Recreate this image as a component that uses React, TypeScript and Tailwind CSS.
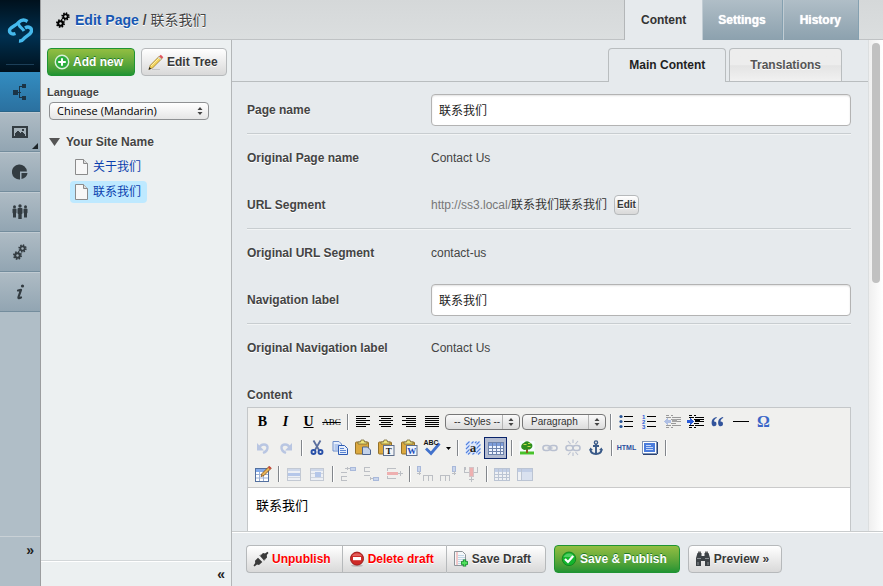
import type { ReactNode } from "react";

/* ---------- shared pieces ---------- */

function Svg({ size = 16, box = size, crisp = false, label, children }: { size?: number; box?: number; crisp?: boolean; label?: string; children: ReactNode }) {
  return (
    <svg width={size} height={size} viewBox={`0 0 ${box} ${box}`} fill="none" className="shrink-0" shapeRendering={crisp ? "crispEdges" : "auto"} aria-hidden={!label} aria-label={label}>
      {children}
    </svg>
  );
}

const silver = "border-[#b6b9bb] bg-linear-to-b from-white to-[#d9d9d9] text-[#393939] [text-shadow:0_1px_0_#fff]";
const green = "border-[#1f9433] bg-linear-to-b from-[#93be42] to-[#1f9433] text-white [text-shadow:0_-1px_0_#1f7a2c]";
const danger = "border-[#b6b9bb] bg-linear-to-b from-white to-[#d9d9d9] text-[#ff0000] [text-shadow:0_1px_0_#fff]";

function Button({ tone, shape = "rounded", pad = "pr-3", icon, children }: { tone: string; shape?: string; pad?: string; icon: ReactNode; children: ReactNode }) {
  return (
    <button type="button" className={`flex h-7 items-center gap-[3px] whitespace-nowrap border pl-1.5 text-xs font-bold ${pad} ${tone} ${shape}`}>
      {icon}
      {children}
    </button>
  );
}

/* ---------- icons ---------- */

function Gear({ x, y, r, hole }: { x: number; y: number; r: number; hole: string }) {
  return (
    <g>
      <circle cx={x} cy={y} r={r} stroke="currentColor" strokeWidth="2" strokeDasharray={`${r * 0.42} ${r * 0.365}`} />
      <circle cx={x} cy={y} r={r - 0.2} fill="currentColor" />
      <circle cx={x} cy={y} r={1.2} fill={hole} />
    </g>
  );
}
const Gears = ({ hole }: { hole: string }) => (
  <Svg>
    <Gear x={10.5} y={4.5} r={3.2} hole={hole} />
    <Gear x={5.5} y={11.5} r={3.5} hole={hole} />
  </Svg>
);

const Logo = () => (
  <svg width="26" height="26" viewBox="0 0 26 26" fill="none" aria-label="SilverStripe">
    <g stroke="#45b9ec" strokeWidth="3.400" strokeLinejoin="round">
      <path d="M8.500 15.500C4 17 1.500 14 3 11 4.500 8.500 9 7.500 11.500 4.500 14 2 17.500 1.500 20.500 3.500" />
      <path d="M11.500 5C11 8.500 15.500 10 17 13" strokeWidth="3" />
      <path d="M18 10C22 7.500 25.500 10.500 24.200 14 23 17 18.500 18.500 16.500 21 15.500 22.500 14 23.200 12 23" />
    </g>
  </svg>
);

const SiteMap = () => (
  <Svg crisp>
    <path d="M1 6h5v5H1zM10 0h4v4h-4zM10 12h4v4h-4z" fill="#1b3446" />
    <path d="M6 8.500h2.500M10 2.500H7.500v11H10" stroke="#1b3446" />
  </Svg>
);
const Picture = () => (
  <Svg crisp>
    <path d="M0 2h16v12H0z" fill="#333c42" />
    <path d="M2 4h12v8H2z" fill="#a4b1b9" />
    <path d="M3 12V9l3-3 2 3 2-2 3 4v1z" fill="#333c42" />
    <path d="M10 5h2v2h-2z" fill="#333c42" />
  </Svg>
);
const Pie = () => (
  <Svg>
    <path d="M8 8V15.500A7.500 7.500 0 1 1 14.900 7.500H8z" fill="#333c42" />
    <path d="M9.500 9H15.500A6.500 6.500 0 0 1 9.500 15z" fill="#333c42" />
  </Svg>
);
const People = () => (
  <Svg>
    <g fill="#333c42">
      <circle cx="2.500" cy="2.700" r="1.500" /><rect x="0.500" y="4.500" width="4" height="5" rx="1" /><rect x="1" y="8" width="3" height="5.500" />
      <circle cx="8" cy="2" r="1.700" /><rect x="5.500" y="4" width="5" height="6" rx="1" /><rect x="6.300" y="8" width="3.400" height="7" />
      <circle cx="13.500" cy="2.700" r="1.500" /><rect x="11.500" y="4.500" width="4" height="5" rx="1" /><rect x="12" y="8" width="3" height="5.500" />
    </g>
  </Svg>
);
const Info = () => (
  <Svg>
    <circle cx="10.500" cy="2" r="1.600" fill="#333c42" />
    <path d="M6 6.500 9 5.800 6.500 13 Q6 15 9 13.500" stroke="#333c42" strokeWidth="2.200" strokeLinejoin="round" strokeLinecap="round" />
  </Svg>
);

const Plus = () => (
  <Svg>
    <circle cx="8" cy="8" r="6.700" fill="#2cae3e" stroke="#d9efda" strokeWidth="1.400" />
    <path d="M8 4.200v7.600M4.200 8h7.600" stroke="#fff" strokeWidth="2" />
  </Svg>
);
const Pencil = () => (
  <Svg>
    <path d="M1 15.500 2.300 11.300 11.500 2 14 4.500 4.800 13.700z" fill="#f3d45c" stroke="#9c7a2a" strokeWidth="0.800" />
    <path d="M3 12 12 3" stroke="#fdf0a8" />
    <path d="M11.200 2.300 12.800 0.800 15.300 3.300 13.800 4.800z" fill="#e0535e" />
    <path d="M10.500 3 13 5.500" stroke="#c9ced2" strokeWidth="1.300" />
    <path d="M0.500 15.800 1.500 13 3.200 14.700z" fill="#222" />
    <path d="M4 15.500h8" stroke="#bbb" strokeWidth="0.800" />
  </Svg>
);
const Page = () => (
  <Svg>
    <path d="M2.500 0.500h8L14.500 4.500v11h-12z" fill="#f7f7f7" stroke="#8b8b8b" />
    <path d="M10.500 0.500v4h4" fill="#ddd" stroke="#8b8b8b" />
  </Svg>
);
const Plug = () => (
  <Svg>
    <path d="M7 5 10 2 12 2.500 14.500 0.800 15.500 2 13.800 4 14 6.500 11 9.500z" fill="#3a3a3a" />
    <path d="M5 6.800 9.300 11 6 14 4 13.500 1.500 15.500 0.500 14.500 2.200 12 2 9.800z" fill="#3a3a3a" />
    <path d="M8 3.500 6.500 5 M12.500 8 10.800 9.500" stroke="#777" />
  </Svg>
);
const Minus = () => (
  <Svg>
    <ellipse cx="8" cy="14.600" rx="6" ry="1.200" fill="#bbb" />
    <circle cx="8" cy="7.600" r="6.500" fill="#cf2a27" stroke="#9c1c1c" />
    <path d="M3 5a6 6 0 0 1 10 0z" fill="#e3605c" />
    <path d="M4 6h8v3.200H4z" fill="#fff" />
  </Svg>
);
const PageAdd = () => (
  <Svg>
    <path d="M1.500 0.500h8l3 3v11h-11z" fill="#f4f7f9" stroke="#8d9499" />
    <path d="M4 1v13" stroke="#ef9a9a" />
    <path d="M5 4.500h6M5 6.500h7M5 8.500h7M5 10.500h4M5 12.500h4" stroke="#b4cde0" strokeWidth="0.800" />
    <path d="M11.500 8.500v7M8 12h7" stroke="#13832a" strokeWidth="3.400" />
    <path d="M11.500 9.200v5.600M8.700 12h5.600" stroke="#4fe05c" strokeWidth="1.800" />
  </Svg>
);
const Check = () => (
  <Svg>
    <circle cx="8" cy="7.800" r="6.800" fill="#12b52c" stroke="#0a7d1c" strokeWidth="0.800" />
    <path d="M2.500 6a6 6 0 0 1 11 0z" fill="#4fd064" />
    <path d="M4 8 7 11 12.200 5" stroke="#fff" strokeWidth="2.200" />
  </Svg>
);
const Binoculars = () => (
  <Svg>
    <path d="M2.500 2h4v3h3V2h4l1.500 5v8h-5v-5h-4v5H1V7z" fill="#3d4246" />
    <path d="M3 0.500h3V2H3zM10 0.500h3V2h-3z" fill="#666" />
    <path d="M2 7.500h4M10 7.500h4M3 11v3M13 11v3" stroke="#8b9094" />
  </Svg>
);

/* ---------- editor icons, on a 20 pixel grid ---------- */

const lines = (rows: [number, number, number][], color = "#000") =>
  rows.map(([x, y, w]) => <rect key={`${x}-${y}`} x={x} y={y} width={w} height="1" fill={color} />);

const Align = ({ kind }: { kind: "left" | "center" | "right" | "full" }) => (
  <Svg size={20} crisp>
    {lines(
      [4, 6, 8, 10, 12, 14].map((y, i): [number, number, number] => {
        const w = kind === "full" || i % 2 === 0 ? 14 : 10;
        return [kind === "right" ? 17 - w : kind === "center" ? 10 - w / 2 : 3, y, w];
      }),
    )}
  </Svg>
);
const Bullets = () => (
  <Svg size={20}>
    {[4, 9, 14].map((y) => (
      <g key={y}><circle cx="5" cy={y + 0.5} r="1.600" fill="#2b5797" /><rect x="8" y={y} width="9" height="1" fill="#000" /></g>
    ))}
  </Svg>
);
const Numbers = () => (
  <Svg size={20}>
    {[4, 9, 14].map((y, i) => (
      <g key={y}><text x="3" y={y + 3} fontSize="6" fontWeight="700" fill="#2a5bd7">{i + 1}</text><rect x="8" y={y} width="9" height="1" fill="#000" /></g>
    ))}
  </Svg>
);
const Indent = ({ out = false }: { out?: boolean }) => (
  <Svg size={20} crisp>
    {lines([[4, 3, 3], [9, 3, 2], [4, 5, 5], [10, 5, 9], [9, 7, 10], [10, 9, 9], [9, 11, 5], [4, 13, 5], [10, 13, 9], [4, 15, 3], [9, 15, 2]], out ? "#9a9a9a" : "#000")}
    <rect x="10" y="7" width="5" height="3" fill={out ? "#a5a5a5" : "#000"} />
    <path d={out ? "M2 9.500 5.500 6v2h3v3h-3v2z" : "M8.500 9.500 5 6v2H2v3h3v2z"} fill={out ? "#b0c0e4" : "#2a5bd7"} />
  </Svg>
);
const Quote = () => (
  <Svg size={20}>
    <path d="M8.500 5C4 6 3 9.500 4 13c1 2 4.500 1.500 4.500-1 0-1.800-1.200-2.600-2.500-2.400C6 8 7 6.500 8.800 6zM15 5c-4.500 1-5.500 4.500-4.500 8 1 2 4.500 1.500 4.500-1 0-1.800-1.200-2.600-2.500-2.400 0-1.600 1-3.100 2.800-3.600z" fill="#32549c" />
  </Svg>
);
const Rule = () => <Svg size={20} crisp><path d="M2 9h16v1H2z" fill="#000" /></Svg>;

const Undo = ({ flip = false }: { flip?: boolean }) => (
  <Svg size={20}>
    <g transform={flip ? "matrix(-1 0 0 1 20 0)" : undefined}>
      <path d="M6.500 9.500C8 5.500 14 5.500 14.500 9c.3 3-2 5-4.500 6" stroke="#b9c6e2" strokeWidth="2.400" />
      <path d="M4 5v7.500h7z" fill="#b9c6e2" />
    </g>
  </Svg>
);
const Cut = () => (
  <Svg size={20}>
    <path d="M6.500 2.500 12 12M13.500 2.500 8 12" stroke="#5b6f9e" strokeWidth="1.800" />
    <circle cx="6.500" cy="14" r="2" stroke="#2850a8" strokeWidth="1.900" />
    <circle cx="13.500" cy="14" r="2" stroke="#2850a8" strokeWidth="1.900" />
  </Svg>
);
const Copy = () => (
  <Svg size={20}>
    <path d="M3 3.500h6l2.500 2.500v7H3z" fill="#e6eefb" stroke="#6b8cc9" />
    <path d="M4.500 7h5M4.500 9h5M4.500 11h5" stroke="#7ea0de" />
    <path d="M8.500 7.500h6l3 3v6h-9z" fill="#e6eefb" stroke="#2e5bb3" />
    <path d="M10 10.500h4M10 12.500h6M10 14.500h6" stroke="#5d86d2" />
  </Svg>
);
const Paste = ({ kind }: { kind: "page" | "T" | "W" }) => (
  <Svg size={20}>
    <rect x="2.500" y="4" width="13" height="12" rx="1" fill="#dca93f" stroke="#93712a" />
    <path d="M5 6V4h2.500l.5-2h3l.5 2H14v2z" fill="#f0e67c" stroke="#7a6a38" strokeWidth="0.800" />
    {kind === "page" ? (
      <path d="M9.500 9h5l3 3v4.500h-8z" fill="#c3d2ea" stroke="#4d648f" />
    ) : (
      <>
        <rect x="7.500" y="7.500" width="10.500" height="10" fill={kind === "W" ? "#eef4ff" : "#f1f3f6"} stroke="#5e6f8c" />
        <text x="12.800" y="16" textAnchor="middle" fontSize="9" fontWeight="700" fontFamily="Liberation Serif, serif" fill={kind === "W" ? "#1c4bb8" : "#111"}>{kind}</text>
      </>
    )}
  </Svg>
);
const Spell = () => (
  <Svg size={20}>
    <path d="M4 10.500 9 15.500 17.500 5.500" stroke="#4272cc" strokeWidth="2.800" />
    <text x="9" y="7" textAnchor="middle" fontSize="7" fontWeight="700" fill="#111">ABC</text>
  </Svg>
);
const StyleA = () => (
  <Svg size={20}>
    <rect x="2.500" y="3.500" width="15" height="13" fill="#dfe9fc" />
    <path d="M3 7 6.500 3.500M3 11 7 7M3 15 7 11M5 16.500 8 13.500M13 7 16.500 3.500M13 11 17.500 6.500M13 15 17.500 10.500M15 16.500 17.500 14M8.500 5.500 10.500 3.500M9.500 16.500 11.500 14.500M12 5 13.500 3.500" stroke="#5482dd" strokeWidth="1.100" />
    <rect x="6.500" y="6" width="7" height="8.500" fill="#dfe9fc" />
    <text x="10" y="14" textAnchor="middle" fontSize="13" fontWeight="700" fontFamily="Liberation Serif, serif" fill="#222">a</text>
  </Svg>
);
const Grid = ({ dim = false, cells = true }: { dim?: boolean; cells?: boolean }) => (
  <Svg size={20} crisp>
    <g opacity={dim ? 0.4 : 1}>
      <rect x="2.500" y="4.500" width="15" height="12" fill="#eef4ff" stroke="#6e84ad" />
      <rect x="3" y="5" width="14" height="3" fill="#7d9ddb" />
      {cells && <path d="M6.500 5v11M10.500 5v11M14.500 5v11M3 10.500h14M3 13.500h14" stroke="#6e84ad" />}
      {!cells && <><rect x="7" y="8" width="10" height="8" fill="#b9cdf2" /><path d="M6.500 5v11" stroke="#6e84ad" /></>}
    </g>
  </Svg>
);
const TableEdit = () => (
  <Svg size={20}>
    <rect x="2.500" y="4.500" width="13" height="13" fill="#fff" stroke="#53709f" />
    <rect x="3" y="5" width="12" height="3" fill="#84abea" />
    <path d="M6.500 8v9M10.500 8v9M3 10.500h12M3 14h12" stroke="#9db2d6" />
    <path d="M8 12.500 9 9.500 16 2.500 18 4.500 11 11.500z" fill="#e7b357" stroke="#7b4b16" strokeWidth="0.800" />
    <path d="M15 3.500 16.500 2 18.500 4 17 5.500z" fill="#c8473d" />
  </Svg>
);
const Props = ({ cell = false }: { cell?: boolean }) => (
  <Svg size={20} crisp>
    <rect x="3.500" y="4.500" width="13" height="12" fill="#edf0f5" stroke="#c3c9d3" />
    <rect x="4" y="5" width="12" height="2" fill="#ced8ea" />
    <path d="M4 9.500h12M4 13.500h12" stroke="#cfd5df" />
    <path d={cell ? "M8 8h6v5H8z" : "M4 9h12v3H4z"} fill="#b5c7e9" />
  </Svg>
);
const RowOp = ({ kind }: { kind: "before" | "after" | "delete" }) => (
  <Svg size={20} crisp>
    {kind === "before" && <><path d="M3 8.500h6M3 12.500h6M3 16.500h6M3.500 12v5M9 4.500h3M9 6V3M7 4.500h2" stroke="#bcbfc4" /><rect x="12.500" y="3" width="5" height="3" fill="#c9d5ec" stroke="#a9b9da" /></>}
    {kind === "after" && <><path d="M3 3.500h6M3 7.500h6M3 11.500h6M3.500 3v5M9 14.500h3M9 16v-3" stroke="#bcbfc4" /><rect x="12.500" y="13" width="5" height="3" fill="#c9d5ec" stroke="#a9b9da" /></>}
    {kind === "delete" && <><path d="M3 4.500h9M3 14.500h9M3.500 4v3M3.500 12v3M12 9.500h7M16 7v5" stroke="#bcbfc4" /><rect x="3" y="8" width="11" height="3" fill="#eeb0b0" /></>}
  </Svg>
);
const ColOp = ({ kind }: { kind: "before" | "after" | "delete" }) => (
  <Svg size={20} crisp>
    {kind === "delete" ? (
      <><path d="M4 3v3M16.500 3v5h-4M3.500 3v5h4M10 12v6M8 15.500h5" stroke="#bcbfc4" /><rect x="8" y="3" width="4" height="9" fill="#eeb0b0" stroke="#d2c3c6" /></>
    ) : (
      <g transform={kind === "after" ? "matrix(-1 0 0 1 20 0)" : undefined}>
        <rect x="2.500" y="2" width="3" height="5" fill="#c9d5ec" stroke="#a9b9da" />
        <path d="M4 7v4M2 9.500h4M8.500 17v-5.500h9V17M13 12v5" stroke="#bcbfc4" />
      </g>
    )}
  </Svg>
);
const Tree = () => (
  <Svg size={20}>
    <rect x="2.500" y="3" width="15" height="14" fill="#f6fbff" />
    <rect x="3" y="13.500" width="14" height="3" fill="#49c22b" />
    <path d="M9 9h2v6H9z" fill="#8a5a22" />
    <path d="M10 3.200c2 0 2.500 1.300 3.500 1.800 2.500.8 2.500 4.500.5 5.500-1.500 1.500-3 1-4 1-1.200.3-3 1-4.500-.5C3.500 10 4 6.200 6.200 5.300 7.500 4.600 8 3.200 10 3.200z" fill="#2e8f1f" />
    <path d="M6.500 6.500h3M11 5.500h2.500M10.500 8.500h3" stroke="#c3dc4a" />
  </Svg>
);
const Link = ({ broken = false }: { broken?: boolean }) => (
  <Svg size={20}>
    <g stroke="#b9c0d0" strokeWidth="1.600">
      <rect x="3" y="7.500" width="7" height="5" rx="2.500" />
      <rect x="10" y="7.500" width="7" height="5" rx="2.500" />
      {broken ? <path d="M10 1.500V5M5 3l2.500 3M15 3l-2.500 3M10 14.500V18M5 17l2.500-3M15 17l-2.500-3" strokeWidth="1.100" /> : <path d="M7.500 10h5" />}
    </g>
  </Svg>
);
const Anchor = () => (
  <Svg size={20}>
    <circle cx="10" cy="4.500" r="1.600" stroke="#3a5a88" strokeWidth="1.400" />
    <path d="M10 6v10M7 8h6M4.500 11c0 3.500 2.500 5 5.500 5s5.500-1.500 5.500-5" stroke="#3a5a88" strokeWidth="1.900" />
    <path d="M3 12.500 4.500 9.500 7 12zM17 12.500 15.500 9.500 13 12z" fill="#3a5a88" />
  </Svg>
);
const FullScreen = () => (
  <Svg size={20} crisp>
    <rect x="2.500" y="3.500" width="14" height="12" fill="#fff" stroke="#7e93b6" />
    <path d="M3 16.500h14M17.500 4v12" stroke="#2b4272" />
    <rect x="4" y="5" width="11" height="9" fill="#4a7cdc" />
    <path d="M6 7.500h5M6 9.500h7M6 11.500h7" stroke="#c4d6f8" />
  </Svg>
);

/* ---------- editor toolbar ---------- */

function Tool({ title, active = false, children }: { title: string; active?: boolean; children: ReactNode }) {
  return (
    <button type="button" title={title} aria-label={title} className={`flex h-[22px] w-[23px] items-center justify-center ${active ? "border border-[#0a246a] bg-[#b2bbd0]" : ""}`}>
      {children}
    </button>
  );
}
const Sep = () => <span className="flex w-2 justify-center"><span className="h-4 w-px bg-[#82868b] shadow-[1px_0_0_#fff]" /></span>;

function Arrows({ color = "#444" }: { color?: string }) {
  return (
    <svg width="6" height="8" viewBox="0 0 6 8" className="pointer-events-none absolute right-1.5 top-1/2 -translate-y-1/2" aria-hidden>
      <path d="M3 0 5.500 3H.5zM3 8 .5 5h5z" fill={color} />
    </svg>
  );
}

function ToolSelect({ label, width }: { label: string; width: string }) {
  return (
    <span className={`relative ${width}`}>
      <select aria-label={label} className="block h-4 w-full appearance-none rounded border border-[#777] bg-linear-to-b from-[#fafafa] to-[#dcdcdc] pl-2 text-[10px] leading-3 text-[#333]">
        <option>{label}</option>
      </select>
      <span className="pointer-events-none absolute right-[17px] top-px h-[14px] w-px bg-[#b5b5b5]" />
      <Arrows />
    </span>
  );
}

function Toolbar() {
  const row = "flex h-[26px] items-center";
  return (
    <div className="border-b border-[#cacaca] bg-[#f0f0ee] pl-[3px] pt-px">
      <div className={row}>
        <Tool title="Bold"><span className="font-['Liberation_Serif',serif] text-sm font-bold text-black">B</span></Tool>
        <Tool title="Italic"><span className="font-['Liberation_Serif',serif] text-sm font-bold italic text-black">I</span></Tool>
        <Tool title="Underline"><span className="font-['Liberation_Serif',serif] text-sm font-bold text-black underline">U</span></Tool>
        <Tool title="Strikethrough"><span className="font-['Liberation_Serif',serif] text-[9px] text-black line-through">ABC</span></Tool>
        <Sep />
        <Tool title="Align left"><Align kind="left" /></Tool>
        <Tool title="Align center"><Align kind="center" /></Tool>
        <Tool title="Align right"><Align kind="right" /></Tool>
        <Tool title="Align full"><Align kind="full" /></Tool>
        <span className="flex gap-0.5 pl-0.5">
          <ToolSelect label="-- Styles --" width="w-[75px]" />
          <ToolSelect label="Paragraph" width="w-[84px]" />
        </span>
        <Sep />
        <Tool title="Unordered list"><Bullets /></Tool>
        <Tool title="Ordered list"><Numbers /></Tool>
        <Tool title="Outdent"><Indent out /></Tool>
        <Tool title="Indent"><Indent /></Tool>
        <Tool title="Blockquote"><Quote /></Tool>
        <Tool title="Horizontal ruler"><Rule /></Tool>
        <Tool title="Special character"><span className="font-['Liberation_Serif',serif] text-base font-bold text-[#3a66c8]">Ω</span></Tool>
      </div>
      <div className={row}>
        <Tool title="Undo"><Undo /></Tool>
        <Tool title="Redo"><Undo flip /></Tool>
        <Sep />
        <Tool title="Cut"><Cut /></Tool>
        <Tool title="Copy"><Copy /></Tool>
        <Tool title="Paste"><Paste kind="page" /></Tool>
        <Tool title="Paste as plain text"><Paste kind="T" /></Tool>
        <Tool title="Paste from Word"><Paste kind="W" /></Tool>
        <Tool title="Spellchecker"><Spell /></Tool>
        <button type="button" aria-label="Spellchecker languages" className="flex w-2.5 justify-center">
          <svg width="5" height="3" viewBox="0 0 5 3" aria-hidden><path d="M0 0h5L2.500 3z" fill="#000" /></svg>
        </button>
        <Sep />
        <Tool title="Visual characters"><StyleA /></Tool>
        <Tool title="Table controls" active><Grid /></Tool>
        <Sep />
        <Tool title="Insert image"><Tree /></Tool>
        <Tool title="Insert link"><Link /></Tool>
        <Tool title="Unlink"><Link broken /></Tool>
        <Tool title="Anchor"><Anchor /></Tool>
        <Sep />
        <Tool title="Edit HTML source"><span className="text-[7px] font-bold text-[#2b4f9e]">HTML</span></Tool>
        <Tool title="Fullscreen"><FullScreen /></Tool>
        <Sep />
      </div>
      <div className={row}>
        <Tool title="Table"><TableEdit /></Tool>
        <Sep />
        <Tool title="Row properties"><Props /></Tool>
        <Tool title="Cell properties"><Props cell /></Tool>
        <Sep />
        <Tool title="Insert row before"><RowOp kind="before" /></Tool>
        <Tool title="Insert row after"><RowOp kind="after" /></Tool>
        <Tool title="Delete row"><RowOp kind="delete" /></Tool>
        <Sep />
        <Tool title="Insert column before"><ColOp kind="before" /></Tool>
        <Tool title="Insert column after"><ColOp kind="after" /></Tool>
        <Tool title="Delete column"><ColOp kind="delete" /></Tool>
        <Sep />
        <Tool title="Split cells"><Grid dim /></Tool>
        <Tool title="Merge cells"><Grid dim cells={false} /></Tool>
      </div>
    </div>
  );
}

/* ---------- layout ---------- */

function MainMenu() {
  const items = [
    { name: "Pages", icon: <SiteMap />, active: true },
    { name: "Files", icon: <Picture />, more: true },
    { name: "Reports", icon: <Pie /> },
    { name: "Security", icon: <People /> },
    { name: "Settings", icon: <Gears hole="#a1afb8" /> },
    { name: "Help", icon: <Info /> },
  ];
  return (
    <nav className="flex w-[41px] shrink-0 flex-col border-r border-[#9b9d9f] bg-[#b0bec7]">
      <div className="flex h-[72px] flex-col items-center bg-linear-to-b from-[#00111d] via-[#003050] to-[#00111d] pt-[18px]">
        <Logo />
        <div className="mt-5 h-px w-7 bg-[#1c3f58]" />
      </div>
      {items.map((item) => (
        <a key={item.name} href="#" aria-label={item.name} className={`relative flex h-10 items-center justify-center border-b ${item.active ? "border-[#2a6589] bg-linear-to-b from-[#338dc1] to-[#2b71a0]" : "border-[#748d9d] bg-linear-to-b from-[#afbcc5] to-[#92a5b2] text-[#333c42] shadow-[inset_0_1px_0_#c0cbd2]"}`}>
          {item.icon}
          {item.more && <svg width="6" height="6" viewBox="0 0 6 6" className="absolute bottom-0.5 right-0.5" aria-hidden><path d="M6 0v6H0z" fill="#1d2529" /></svg>}
        </a>
      ))}
      <button type="button" aria-label="Expand menu" className="mt-auto h-[50px] border-t border-[#c9d1d6] pb-6 pr-1.5 text-right text-sm leading-6 font-bold text-[#1f1f1f]">»</button>
    </nav>
  );
}

function TreePanel() {
  const pages = [
    { title: "关于我们", current: false },
    { title: "联系我们", current: true },
  ];
  return (
    <aside className="flex w-[191px] shrink-0 flex-col border-r border-[#b3b6b8] bg-[#ecf0f1]">
      <div className="flex gap-1.5 pl-1.5 pt-2">
        <Button tone={green} icon={<Plus />} pad="pr-[11px]">Add new</Button>
        <Button tone={silver} icon={<Pencil />} pad="pr-2">Edit Tree</Button>
      </div>
      <div className="pl-1.5 pt-2">
        <label htmlFor="lang" className="block text-[11px] leading-4 font-bold text-[#444] [text-shadow:0_1px_0_#fff]">Language</label>
        <span className="relative mt-0.5 ml-0.5 block w-40">
          <select id="lang" className="block h-[18px] w-full appearance-none rounded border border-[#8f9193] bg-linear-to-b from-white to-[#e6e6e6] pl-[7px] font-['Open_Sans','Noto_Sans',sans-serif] text-[11px] leading-4 text-black">
            <option>Chinese (Mandarin)</option>
          </select>
          <Arrows />
        </span>
      </div>
      <ul className="mt-3 px-1.5">
        <li>
          <div className="flex h-5 items-center gap-1.5 pl-0.5 text-xs font-bold text-[#444] [text-shadow:0_1px_0_#fff]">
            <svg width="11" height="8" viewBox="0 0 11 8" aria-hidden><path d="M0 0h11L5.500 8z" fill="#555" /></svg>
            Your Site Name
          </div>
          <ul className="mt-1 flex flex-col items-start gap-[3px] pl-[23px]">
            {pages.map((p) => (
              <li key={p.title}>
                <a href="#" className={`flex h-[22px] items-center gap-1 rounded pl-[3px] pr-1.5 text-xs text-[#0b3fae] ${p.current ? "bg-[#bee9ff]" : ""}`}>
                  <Page />
                  {p.title}
                </a>
              </li>
            ))}
          </ul>
        </li>
      </ul>
      <button type="button" aria-label="Collapse panel" className="mt-auto h-[25px] border-t border-white pr-1.5 text-right text-sm leading-6 font-bold text-[#1f1f1f] shadow-[0_-1px_0_#d3d7d9]">«</button>
    </aside>
  );
}

function Row({ label, id, line = false, children }: { label: string; id?: string; line?: boolean; children: ReactNode }) {
  const labelClass = "w-[184px] shrink-0 font-bold text-[#444] [text-shadow:0_1px_0_#fff]";
  return (
    <div className={`flex items-center pb-[7px] pt-2 ${line ? "border-b border-[#c8cdd0] shadow-[0_1px_0_#f2f4f5]" : ""}`}>
      {id ? <label htmlFor={id} className={labelClass}>{label}</label> : <div className={labelClass}>{label}</div>}
      <div className="flex h-8 min-w-0 flex-1 items-center text-[#444]">{children}</div>
    </div>
  );
}

const field = "h-8 w-full rounded border border-[#b3b3b3] bg-white px-[7px] pb-0.5 text-[#222] shadow-[inset_0_1px_2px_#e2e2e2]";

export default function App() {
  const blueTab = "flex h-full items-center border-r border-[#84a0b0] bg-linear-to-b from-[#b0bec7] to-[#8ca1ae] text-white shadow-[inset_1px_0_0_#c1ccd3] [text-shadow:0_0_1px_#fff]";
  return (
    <div className="flex h-screen overflow-hidden bg-[#e6eaed] font-['Liberation_Sans','Noto_Sans_CJK_SC',sans-serif] text-xs">
      <MainMenu />
      <div className="flex min-w-0 flex-1 flex-col">
        <header className="flex h-10 shrink-0 items-stretch border-b border-[#bfc2c4] bg-linear-to-b from-[#d5d8d9] to-[#dbdedf] pr-6">
          <h1 className="flex flex-1 items-center gap-1 pl-3.5 text-sm text-[#444] [text-shadow:0_1px_0_#fff]">
            <span className="text-black"><Gears hole="#d8dbdc" /></span>
            <span className="whitespace-pre"><a href="#" className="font-bold text-[#1556b2]">Edit Page</a><b> / </b>联系我们</span>
          </h1>
          <nav className="flex h-10 font-bold">
            <a href="#" className="flex h-full items-center border-l border-[#b3b6b8] bg-[#e6eaed] px-4 text-[#333]">Content</a>
            <a href="#" className={`${blueTab} px-4`}>Settings</a>
            <a href="#" className={`${blueTab} px-[17px]`}>History</a>
          </nav>
        </header>
        <div className="flex min-h-0 flex-1">
          <TreePanel />
          <main className="flex min-w-0 flex-1 flex-col">
            <div className="flex min-h-0 flex-1">
              <form className="min-w-0 flex-1 overflow-hidden">
                <div className="flex h-[42px] items-end justify-end gap-[3px] border-b border-[#b9bdbf] pr-[26px] font-bold">
                  <a href="#" className="-mb-px flex h-[34px] items-center rounded-t border border-b-0 border-[#b9bdbf] bg-[#e6eaed] px-5 pb-0.5 text-[#1f1f1f]">Main Content</a>
                  <a href="#" className="flex h-[33px] items-center rounded-t border border-b-0 border-[#b9bdbf] bg-linear-to-b from-[#ededed] from-50% via-[#e4e4e4] via-52% to-[#f1f1f1] px-5 text-[#555] [text-shadow:0_1px_0_#fff]">Translations</a>
                </div>
                <div className="pl-[15px] pr-[17px] pt-1">
                  <Row label="Page name" id="pn" line><input id="pn" defaultValue="联系我们" className={field} /></Row>
                  <Row label="Original Page name">Contact Us</Row>
                  <Row label="URL Segment" line>
                    <span className="text-[#777]">http://ss3.local/<span className="text-[#333]">联系我们联系我们</span></span>
                    <button type="button" className={`ml-[7px] h-5 rounded border px-0.5 text-[10px] font-bold ${silver}`}>Edit</button>
                  </Row>
                  <Row label="Original URL Segment">contact-us</Row>
                  <Row label="Navigation label" id="nl" line><input id="nl" defaultValue="联系我们" className={field} /></Row>
                  <Row label="Original Navigation label">Contact Us</Row>
                  <label htmlFor="content" className="block pb-1 pt-4 font-bold text-[#444] [text-shadow:0_1px_0_#fff]">Content</label>
                  <div className="border border-[#c4c7c9] bg-white">
                    <Toolbar />
                    <textarea id="content" defaultValue="联系我们" className="block h-75 w-full resize-none px-2 py-2 text-[13px] leading-5 text-black" />
                  </div>
                </div>
              </form>
              <div className="w-[15px] shrink-0 border-l border-[#dcdfe0] bg-linear-to-r from-[#efefef] to-white px-[3px] pt-[3px]">
                <div className="h-[49%] w-2 rounded-full bg-[#c1c1c1]" />
              </div>
            </div>
            <footer className="flex h-[54px] shrink-0 gap-2 border-t border-white pl-3.5 pt-3 shadow-[0_-1px_0_#c9cccd]">
              <div className="flex">
                <Button tone={danger} shape="rounded-l border-r-0" pad="pr-[11px]" icon={<Plug />}>Unpublish</Button>
                <Button tone={danger} shape="border-r-0" icon={<Minus />}>Delete draft</Button>
                <Button tone={silver} shape="rounded-r" pad="pr-3.5" icon={<PageAdd />}>Save Draft</Button>
              </div>
              <Button tone={green} icon={<Check />}>Save &amp; Publish</Button>
              <Button tone={silver} icon={<Binoculars />}>Preview »</Button>
            </footer>
          </main>
        </div>
      </div>
    </div>
  );
}
